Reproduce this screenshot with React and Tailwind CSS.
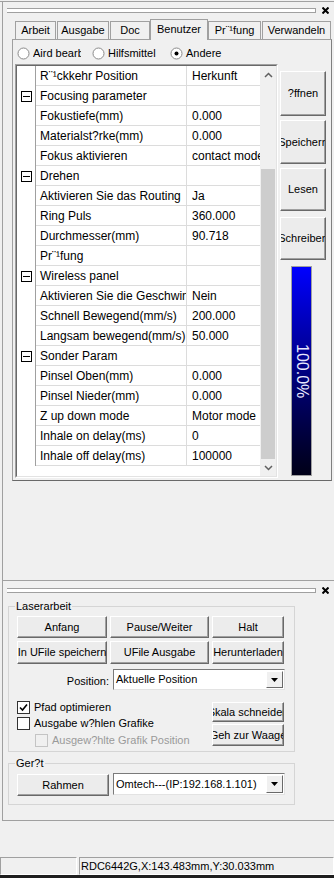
import React from "react";

// Property rows of the "Benutzer" tab (list is scrolled to the bottom).
const ROWS = [
  { name: "R¨¹ckkehr Position", value: "Herkunft" },
  { name: "Focusing parameter", cat: true },
  { name: "Fokustiefe(mm)", value: "0.000" },
  { name: "Materialst?rke(mm)", value: "0.000" },
  { name: "Fokus aktivieren", value: "contact mode" },
  { name: "Drehen", cat: true },
  { name: "Aktivieren Sie das Routing", value: "Ja" },
  { name: "Ring Puls", value: "360.000" },
  { name: "Durchmesser(mm)", value: "90.718" },
  { name: "Pr¨¹fung", value: "" },
  { name: "Wireless panel", cat: true },
  { name: "Aktivieren Sie die Geschwindigkeit", value: "Nein" },
  { name: "Schnell Bewegend(mm/s)", value: "200.000" },
  { name: "Langsam bewegend(mm/s)", value: "50.000" },
  { name: "Sonder Param", cat: true },
  { name: "Pinsel Oben(mm)", value: "0.000" },
  { name: "Pinsel Nieder(mm)", value: "0.000" },
  { name: "Z up down mode", value: "Motor mode" },
  { name: "Inhale on delay(ms)", value: "0" },
  { name: "Inhale off delay(ms)", value: "100000" },
];

const TABS = [
  { label: "Arbeit", w: "w-[41px]", ml: "ml-0" },
  { label: "Ausgabe", w: "w-[52px]", ml: "ml-[1px]" },
  { label: "Doc", w: "w-[40px]", ml: "ml-[1px]" },
  { label: "Benutzer", w: "w-[58px]", ml: "ml-0", active: true },
  { label: "Pr¨¹fung", w: "w-[53px]", ml: "ml-0" },
  { label: "Verwandeln", w: "w-[69px]", ml: "ml-[1px]" },
];

function Btn({ children, className = "" }) {
  return (
    <div
      className={`flex shrink-0 items-center justify-center overflow-hidden whitespace-nowrap border border-t-white border-l-white border-r-[#696969] border-b-[#696969] bg-[#ececec] shadow-[inset_-1px_-1px_0_#a0a0a0] ${className}`}
    >
      {children}
    </div>
  );
}

function Gripper() {
  return (
    <div className="flex items-center">
      <div className="ml-[4px] h-[5px] w-[309px] border-y border-r border-[#a0a0a0] bg-white" />
      <svg className="ml-[6px]" width="7" height="7" viewBox="0 0 7 7">
        <path d="M0.5 0.5L6.5 6.5M6.5 0.5L0.5 6.5" stroke="#000" strokeWidth="2" />
      </svg>
    </div>
  );
}

function Radio({ checked }) {
  return (
    <svg width="13" height="13" viewBox="0 0 13 13" className="shrink-0">
      <circle cx="6.5" cy="6.5" r="5.5" fill="#fff" stroke="#8a8a8a" />
      {checked && <circle cx="6.5" cy="6.5" r="2" fill="#000" />}
    </svg>
  );
}

function Check({ checked, disabled }) {
  return (
    <div
      className={`flex h-[13px] w-[13px] shrink-0 items-center justify-center border ${
        disabled ? "border-[#c4c4c4] bg-[#f0f0f0]" : "border-[#333] bg-white"
      }`}
    >
      {checked && (
        <svg width="9" height="9" viewBox="0 0 9 9">
          <path d="M1 4.5L3.5 7L8 1.5" fill="none" stroke="#000" strokeWidth="1.6" />
        </svg>
      )}
    </div>
  );
}

function Combo({ text, className = "" }) {
  return (
    <div
      className={`flex items-center border border-t-[#7a7a7a] border-l-[#7a7a7a] border-r-[#e3e3e3] border-b-[#e3e3e3] bg-white p-[1px] ${className}`}
    >
      <span className="flex-1 overflow-hidden whitespace-nowrap pl-[1px]">{text}</span>
      <div className="flex h-full w-[17px] items-center justify-center border border-t-white border-l-white border-r-[#696969] border-b-[#696969] bg-[#f0f0f0]">
        <svg width="7" height="4" viewBox="0 0 7 4">
          <path d="M0 0H7L3.5 4Z" fill="#000" />
        </svg>
      </div>
    </div>
  );
}

function GridRow({ row }) {
  return (
    <div className="flex h-[20px]">
      <div className="flex w-[19px] items-center justify-center border-r border-[#a0a0a0]">
        {row.cat && (
          <div className="flex h-[11px] w-[11px] items-center justify-center border border-[#000]">
            <div className="h-[1px] w-[7px] bg-[#000]" />
          </div>
        )}
      </div>
      <div className="flex w-[151px] items-center overflow-hidden whitespace-nowrap border-r border-b border-[#dcdcdc] pl-[4px]">
        {row.name}
      </div>
      <div className="flex w-[73px] items-center overflow-hidden whitespace-nowrap border-b border-[#dcdcdc] pl-[5px]">
        {row.value}
      </div>
    </div>
  );
}

function Group({ label, className = "", children }) {
  return (
    <div className={`flex flex-col border border-[#d5d5d5] ${className}`}>
      <div className="-mt-[7px] ml-[6px] w-fit bg-[#f0f0f0] px-[1px] leading-[13px]">{label}</div>
      {children}
    </div>
  );
}

export default function App() {
  return (
    <div className="flex h-[878px] w-[334px] flex-col overflow-hidden bg-[#f0f0f0] font-['Liberation_Sans',Arial,sans-serif] text-[11px] text-black">
      <div className="h-[1px]" />
      <div className="h-[1px] bg-[#a0a0a0]" />

      {/* upper docked pane */}
      <div className="ml-[2px] flex h-[579px] flex-col border-l border-b border-[#a0a0a0]">
        <div className="pt-[5px]">
          <Gripper />
        </div>

        {/* tab strip */}
        <div className="relative z-10 mt-[5px] flex h-[20px] items-end pl-[12px]">
          {TABS.map((t) => (
            <div
              key={t.label}
              className={`${t.w} ${t.ml} flex items-center justify-center whitespace-nowrap border-x border-t border-[#a0a0a0] ${
                t.active ? "-mb-[1px] h-[21px] bg-[#f0f0f0] pb-[2px]" : "h-[18px] bg-[#f0f0f0]"
              }`}
            >
              {t.label}
            </div>
          ))}
        </div>

        {/* tab page */}
        <div className="ml-[9px] flex h-[442px] w-[320px] flex-col border border-t-[#a0a0a0] border-l-[#a0a0a0] border-r-[#808080] border-b-[#696969]">
          <div className="mt-[7px] flex h-[13px] items-center pl-[4px]">
            <div className="flex w-[75px] items-center gap-[3px]">
              <Radio />
              <span className="w-[48px] overflow-hidden whitespace-nowrap">Aird bearbeiten</span>
            </div>
            <div className="flex w-[78px] items-center gap-[3px]">
              <Radio />
              <span>Hilfsmittel</span>
            </div>
            <div className="flex items-center gap-[3px]">
              <Radio checked />
              <span>Andere</span>
            </div>
          </div>

          <div className="mt-[4px] flex">
            {/* property grid */}
            <div className="ml-[2px] h-[414px] w-[263px] border border-t-[#a0a0a0] border-l-[#a0a0a0] border-r-white border-b-white">
              <div className="flex h-full border border-t-[#696969] border-l-[#696969] border-r-[#e3e3e3] border-b-[#e3e3e3] bg-white text-[12px]">
                <div className="flex w-[243px] flex-col">
                  {ROWS.map((r) => (
                    <GridRow key={r.name} row={r} />
                  ))}
                </div>
                <div className="flex w-[16px] flex-col bg-[#f0f0f0]">
                  <div className="flex h-[17px] items-center justify-center">
                    <svg width="9" height="6" viewBox="0 0 9 6">
                      <path d="M1 5L4.5 1.5L8 5" fill="none" stroke="#606060" strokeWidth="1.5" />
                    </svg>
                  </div>
                  <div className="h-[86px]" />
                  <div className="mx-[1px] h-[290px] bg-[#cdcdcd]" />
                  <div className="flex h-[17px] items-center justify-center">
                    <svg width="9" height="6" viewBox="0 0 9 6">
                      <path d="M1 1L4.5 4.5L8 1" fill="none" stroke="#606060" strokeWidth="1.5" />
                    </svg>
                  </div>
                </div>
              </div>
            </div>

            {/* side buttons + progress */}
            <div className="flex w-[52px] flex-col">
              <Btn className="ml-[2px] mt-[7px] h-[45px] w-[46px]">?ffnen</Btn>
              <Btn className="ml-[2px] mt-[4px] h-[44px] w-[46px]">Speichern</Btn>
              <Btn className="ml-[2px] mt-[4px] h-[43px] w-[46px]">Lesen</Btn>
              <Btn className="ml-[2px] mt-[6px] h-[43px] w-[46px]">Schreiben</Btn>
              <div className="ml-[13px] mt-[6px] flex h-[210px] w-[21px] items-center justify-center border border-[#a0a0a0] bg-linear-to-b from-[#0000ff] to-[#000018]">
                <span className="text-[16px] leading-none text-[#e8e8ff] [writing-mode:vertical-rl]">100.0%</span>
              </div>
            </div>
          </div>
        </div>
      </div>

      {/* lower docked pane */}
      <div className="ml-[2px] flex h-[240px] flex-col border-l border-b border-[#a0a0a0]">
        <div className="pt-[6px]">
          <Gripper />
        </div>

        <Group label="Laserarbeit" className="ml-[5px] mt-[12px] h-[146px] w-[287px]">
          <div className="mt-[3px] flex gap-[3px] pl-[8px]">
            <Btn className="h-[22px] w-[90px]">Anfang</Btn>
            <Btn className="h-[22px] w-[99px]">Pause/Weiter</Btn>
            <Btn className="h-[22px] w-[72px]">Halt</Btn>
          </div>
          <div className="mt-[3px] flex gap-[3px] pl-[8px]">
            <Btn className="h-[23px] w-[90px]">In UFile speichern</Btn>
            <Btn className="h-[23px] w-[99px]">UFile Ausgabe</Btn>
            <Btn className="h-[23px] w-[72px]">Herunterladen</Btn>
          </div>
          <div className="mt-[5px] flex items-center">
            <span className="w-[100px] pt-[4px] text-right">Position:</span>
            <Combo text="Aktuelle Position" className="ml-[4px] h-[21px] w-[172px]" />
          </div>
          <div className="mt-[9px] flex pl-[8px]">
            <div className="flex w-[195px] flex-col">
              <div className="flex h-[16px] items-center gap-[4px]">
                <Check checked />
                <span>Pfad optimieren</span>
              </div>
              <div className="flex h-[16px] items-center gap-[4px]">
                <Check />
                <span>Ausgabe w?hlen Grafike</span>
              </div>
              <div className="mt-[1px] flex h-[16px] items-center gap-[4px] pl-[18px] text-[#9a9a9a]">
                <Check disabled />
                <span>Ausgew?hlte Grafik Position</span>
              </div>
            </div>
            <div className="flex flex-col">
              <Btn className="mt-[3px] h-[20px] w-[72px]">Skala schneiden</Btn>
              <Btn className="mt-[2px] h-[22px] w-[72px]">Geh zur Waage</Btn>
            </div>
          </div>
        </Group>

        <Group label="Ger?t" className="ml-[5px] mt-[11px] h-[42px] w-[287px]">
          <div className="mt-[3px] flex items-start pl-[8px]">
            <Btn className="mt-[1px] h-[22px] w-[92px]">Rahmen</Btn>
            <Combo text="Omtech---(IP:192.168.1.101)" className="ml-[4px] h-[22px] w-[172px]" />
          </div>
        </Group>
      </div>

      <div className="h-[36px]" />

      {/* status bar */}
      <div className="flex h-[18px] gap-[2px]">
        <div className="w-[77px] border border-t-[#a0a0a0] border-l-[#a0a0a0] border-r-white border-b-white" />
        <div className="flex w-[255px] items-center border border-t-[#a0a0a0] border-l-[#a0a0a0] border-r-white border-b-white pl-[1px]">
          RDC6442G,X:143.483mm,Y:30.033mm
        </div>
      </div>
      <div className="h-[3px] bg-[#1e1e1e]" />
    </div>
  );
}
